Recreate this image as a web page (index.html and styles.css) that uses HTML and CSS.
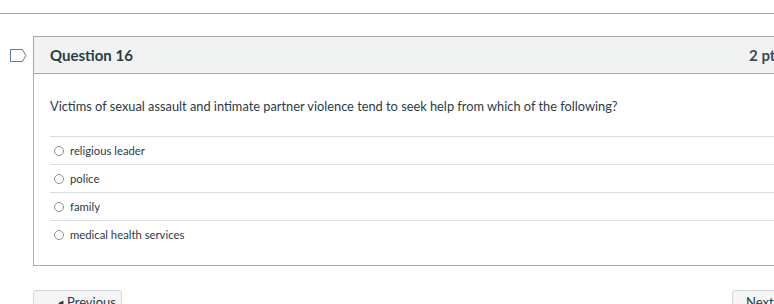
FILE: index.html
```html
<!DOCTYPE html>
<html lang="en">
<head>
  <meta charset="UTF-8" />
  <title>Question 16</title>
  <link rel="stylesheet" href="styles.css">
</head>
<body>
  <hr class="top-rule">

  <div class="question-row">
    <div class="flag-col">
      <svg class="flag" width="17" height="13" viewBox="0 0 17 13">
        <path d="M0.5 0.5 H12.5 L15.8 6.5 L12.5 12.5 H0.5 Z" fill="none" stroke="#5b7d9c" stroke-width="1"/>
      </svg>
    </div>

    <div class="question">
      <div class="question-header">
        <h2>Question 16</h2>
        <span class="points">2 pts</span>
      </div>
      <div class="question-body">
        <p class="question-text">Victims of sexual assault and intimate partner violence tend to seek help from which of the following?</p>
        <div class="answers">
          <label class="answer"><span class="radio"></span>religious leader</label>
          <label class="answer"><span class="radio"></span>police</label>
          <label class="answer"><span class="radio"></span>family</label>
          <label class="answer"><span class="radio"></span>medical health services</label>
        </div>
      </div>
    </div>
  </div>

  <div class="nav">
    <button class="nav-btn"><span class="arrow">&#9664;</span> Previous</button>
    <button class="nav-btn next">Next <span class="arrow">&#9654;</span></button>
  </div>
</body>
</html>
```

FILE: styles.css
```css
body { margin: 0; font-family: Lato, "Open Sans", sans-serif; color: #2d3b45; background: #fff; overflow: hidden; width: 774px; }
.top-rule { margin: 13px 0 0; border: none; border-top: 1px solid #a9a9a9; height: 0; }
.question-row { display: flex; padding-top: 22px; }
.flag-col { width: 33px; flex-shrink: 0; padding-top: 13px; padding-left: 10px; box-sizing: border-box; }
.flag { display: block; }
.question { width: 764px; flex-shrink: 0; border: 1px solid #a9a9a9; }
.question-header { background: #f1f2f2; border-bottom: 1px solid #a9a9a9; height: 36px; display: flex; align-items: center; justify-content: space-between; padding: 0 16px; }
.question-header h2 { margin: 0; font-size: 15px; font-weight: 700; }
.points { font-size: 15px; font-weight: 700; color: #3c4a54; }
.question-body { padding: 22px 0 17px 16px; }
.question-text { margin: 0 0 20px; font-size: 12.8px; line-height: 20px; }
.answers { display: flex; flex-direction: column; }
.answer { display: flex; align-items: center; gap: 6px; height: 27px; border-top: 1px solid #dadddf; padding-left: 4px; font-size: 11.3px; }
.radio { width: 8px; height: 8px; border: 1px solid #8a8f93; border-radius: 50%; }
.nav { display: flex; justify-content: space-between; padding: 24px 0 0 33px; width: 775px; }
.nav-btn { font-family: Lato, sans-serif; font-size: 13px; line-height: 16px; color: #2d3b45; background: #f5f5f5; border: 1px solid #d3d7da; border-radius: 3px; height: 36px; padding: 3px 0 0 24px; width: 89px; text-align: left; display: flex; align-items: flex-start; gap: 4px; }
.nav-btn.next { width: 76px; padding-left: 13px; }
.arrow { font-size: 7px; line-height: 16px; }
```
